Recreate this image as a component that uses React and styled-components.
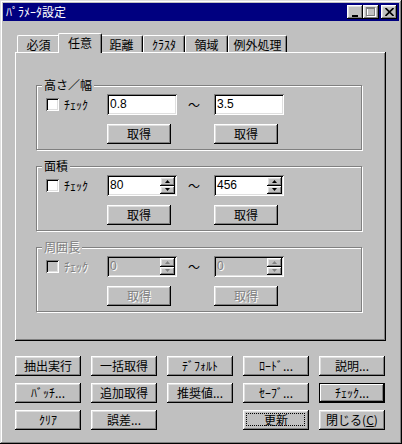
import React from "react";
import styled, { createGlobalStyle, css } from "styled-components";

const FACE = "#c0c0c0";

const GlobalStyle = createGlobalStyle`
  html, body {
    margin: 0;
    padding: 0;
    background: ${FACE};
  }
  body {
    font-family: "Noto Sans CJK JP", "Liberation Sans", sans-serif;
    font-size: 12px;
    color: #000;
  }
`;

const raised = css`
  box-shadow: inset -1px -1px #000, inset 1px 1px #fff, inset -2px -2px #808080,
    inset 2px 2px #dfdfdf;
`;

const sunken = css`
  box-shadow: inset 1px 1px #808080, inset -1px -1px #fff, inset 2px 2px #000,
    inset -2px -2px #dfdfdf;
`;

const disabledText = css`
  color: #808080;
  text-shadow: 1px 1px 0 #fff;
`;

const Window = styled.div`
  width: 402px;
  height: 444px;
  box-sizing: border-box;
  padding: 3px;
  background: ${FACE};
  box-shadow: inset -1px -1px #000, inset 1px 1px #dfdfdf,
    inset -2px -2px #808080, inset 2px 2px #fff;
  display: flex;
  flex-direction: column;
`;

const TitleBar = styled.div`
  height: 18px;
  background: #000080;
  color: #fff;
  display: flex;
  align-items: center;
  justify-content: space-between;
  padding: 0 2px 0 3px;
`;

const TitleText = styled.span`
  font-size: 12px;
  line-height: 18px;
`;

const TitleButtons = styled.div`
  display: flex;
`;

const TitleButton = styled.div`
  width: 16px;
  height: 14px;
  background: ${FACE};
  ${raised};
  display: flex;
  align-items: center;
  justify-content: center;
  margin-left: ${(p) => (p.$gap ? "2px" : "0")};
`;

const Body = styled.div`
  padding: 12px 13px 0 12px;
  display: flex;
  flex-direction: column;
`;

const TabStrip = styled.div`
  display: flex;
  align-items: flex-end;
  height: 19px;
  padding-left: 2px;
  position: relative;
  z-index: 1;
`;

const Tab = styled.div`
  box-sizing: border-box;
  width: ${(p) => (p.$active ? p.$w + 4 : p.$w)}px;
  height: ${(p) => (p.$active ? 20 : 17)}px;
  margin: ${(p) => (p.$active ? "0 -2px -1px -2px" : "0")};
  position: relative;
  z-index: ${(p) => (p.$active ? 2 : 1)};
  background: ${FACE};
  border-top: 1px solid #fff;
  border-left: 1px solid #fff;
  border-right: 1px solid #000;
  border-radius: 2px 2px 0 0;
  box-shadow: inset -1px 0 #808080;
  display: flex;
  align-items: ${(p) => (p.$active ? "flex-start" : "center")};
  padding-top: ${(p) => (p.$active ? "1px" : "0")};
  justify-content: center;
  font-size: 12px;
  line-height: 15px;
`;

const Panel = styled.div`
  width: 371px;
  height: 289px;
  box-sizing: border-box;
  box-shadow: inset -1px -1px #000, inset 1px 1px #fff, inset -2px -2px #808080;
  padding: 33px 0 0 21px;
  display: flex;
  flex-direction: column;
  gap: 16px;
`;

const GroupBox = styled.div`
  position: relative;
  width: 326px;
  height: 65px;
  box-sizing: border-box;
  border: 1px solid #808080;
  box-shadow: 1px 1px 0 #fff, inset 1px 1px 0 #fff;
  padding: 8px 0 0 9px;
`;

const Legend = styled.span`
  position: absolute;
  top: -9px;
  left: 5px;
  padding: 0 2px;
  background: ${FACE};
  font-size: 12px;
  line-height: 16px;
  ${(p) => p.$disabled && disabledText};
`;

const GroupGrid = styled.div`
  display: grid;
  grid-template-columns: 61px 70px 37px 70px;
  grid-template-rows: 21px 20px;
  row-gap: 9px;
  align-items: center;
`;

const CheckRow = styled.label`
  display: flex;
  align-items: center;
  gap: 5px;
  font-size: 12px;
  ${(p) => p.$disabled && disabledText};
`;

const CheckBox = styled.span`
  width: 13px;
  height: 13px;
  box-sizing: border-box;
  background: ${(p) => (p.$disabled ? FACE : "#fff")};
  ${sunken};
`;

const Edit = styled.div`
  height: 21px;
  box-sizing: border-box;
  background: ${(p) => (p.$disabled ? FACE : "#fff")};
  ${sunken};
  display: flex;
  align-items: stretch;
  padding: 2px;
`;

const EditText = styled.span`
  flex: 1;
  font-family: "Liberation Sans", "Noto Sans CJK JP", sans-serif;
  font-size: 12px;
  line-height: 17px;
  padding-left: 1px;
  ${(p) => p.$disabled && disabledText};
`;

const Spin = styled.div`
  width: 15px;
  display: flex;
  flex-direction: column;
`;

const SpinButton = styled.div`
  flex: 1;
  background: ${FACE};
  ${raised};
  display: flex;
  align-items: center;
  justify-content: center;
`;

const Tilde = styled.span`
  text-align: center;
  font-size: 12px;
  padding-right: 3px;
`;

const Button = styled.div`
  box-sizing: border-box;
  width: ${(p) => (p.$w ? `${p.$w}px` : "auto")};
  height: 20px;
  background: ${FACE};
  ${raised};
  display: flex;
  align-items: center;
  justify-content: center;
  font-size: 12px;
  line-height: 14px;
  position: relative;
  ${(p) => p.$disabled && disabledText};
  ${(p) =>
    p.$default &&
    css`
      box-shadow: inset 0 0 0 1px #000, inset -2px -2px #000, inset 2px 2px #fff,
        inset -3px -3px #808080;
    `};
`;

const FocusRing = styled.span`
  position: absolute;
  inset: 3px 4px 4px 3px;
  border: 1px dotted #000;
`;

const ButtonGrid = styled.div`
  display: grid;
  grid-template-columns: repeat(5, 66px);
  grid-auto-rows: 20px;
  column-gap: 10px;
  row-gap: 7px;
  margin-top: 15px;
`;

const Empty = styled.div``;

const Arrow = ({ up, disabled }) => (
  <svg width="5" height="3" viewBox="0 0 5 3">
    <path
      d={up ? "M2.5 0 L5 3 L0 3 Z" : "M0 0 L5 0 L2.5 3 Z"}
      fill={disabled ? "#808080" : "#000"}
    />
  </svg>
);

const Field = ({ value, spin, disabled }) => (
  <Edit $disabled={disabled}>
    <EditText $disabled={disabled}>{value}</EditText>
    {spin && (
      <Spin>
        <SpinButton>
          <Arrow up disabled={disabled} />
        </SpinButton>
        <SpinButton>
          <Arrow disabled={disabled} />
        </SpinButton>
      </Spin>
    )}
  </Edit>
);

const Group = ({ title, from, to, spin, disabled }) => (
  <GroupBox>
    <Legend $disabled={disabled}>{title}</Legend>
    <GroupGrid>
      <CheckRow $disabled={disabled}>
        <CheckBox $disabled={disabled} />
        ﾁｪｯｸ
      </CheckRow>
      <Field value={from} spin={spin} disabled={disabled} />
      <Tilde>～</Tilde>
      <Field value={to} spin={spin} disabled={disabled} />
      <Empty />
      <Button $disabled={disabled} $w={64}>
        取得
      </Button>
      <Empty />
      <Button $disabled={disabled} $w={64}>
        取得
      </Button>
    </GroupGrid>
  </GroupBox>
);

const tabs = [
  { label: "必須", w: 43 },
  { label: "任意", w: 40, active: true },
  { label: "距離", w: 43 },
  { label: "ｸﾗｽﾀ", w: 42 },
  { label: "領域", w: 43 },
  { label: "例外処理", w: 59 },
];

const buttons = [
  "抽出実行",
  "一括取得",
  "ﾃﾞﾌｫﾙﾄ",
  "ﾛｰﾄﾞ...",
  "説明...",
  "ﾊﾞｯﾁ...",
  "追加取得",
  "推奨値...",
  "ｾｰﾌﾞ...",
  "ﾁｪｯｸ...",
  "ｸﾘｱ",
  "誤差...",
  null,
  "更新",
  "閉じる(C)",
];

const App = () => {
  return (
    <>
      <GlobalStyle />
      <Window>
        <TitleBar>
          <TitleText>ﾊﾟﾗﾒｰﾀ設定</TitleText>
          <TitleButtons>
            <TitleButton>
              <svg width="8" height="9" viewBox="0 0 8 9">
                <rect x="1" y="7" width="6" height="2" fill="#000" />
              </svg>
            </TitleButton>
            <TitleButton>
              <svg width="10" height="10" viewBox="0 0 10 10">
                <rect x="1.5" y="1.5" width="8" height="8" fill="none" stroke="#fff" />
                <rect x="0.5" y="0.5" width="8" height="8" fill="none" stroke="#808080" />
                <rect x="1" y="1" width="8" height="1" fill="#808080" />
              </svg>
            </TitleButton>
            <TitleButton $gap>
              <svg width="9" height="8" viewBox="0 0 9 8">
                <path d="M0.5 0 L8.5 8 M8.5 0 L0.5 8" stroke="#000" strokeWidth="1.6" />
              </svg>
            </TitleButton>
          </TitleButtons>
        </TitleBar>
        <Body>
          <TabStrip>
            {tabs.map((t) => (
              <Tab key={t.label} $w={t.w} $active={t.active}>
                {t.label}
              </Tab>
            ))}
          </TabStrip>
          <Panel>
            <Group title="高さ／幅" from="0.8" to="3.5" />
            <Group title="面積" from="80" to="456" spin />
            <Group title="周囲長" from="0" to="0" spin disabled />
          </Panel>
          <ButtonGrid>
            {buttons.map((b, i) =>
              b === null ? (
                <Empty key={i} />
              ) : (
                <Button key={i} $default={b === "ﾁｪｯｸ..."}>
                  {b === "閉じる(C)" ? (
                    <span>
                      閉じる(<u>C</u>)
                    </span>
                  ) : (
                    b
                  )}
                  {b === "更新" && <FocusRing />}
                </Button>
              )
            )}
          </ButtonGrid>
        </Body>
      </Window>
    </>
  );
};

export default App;
